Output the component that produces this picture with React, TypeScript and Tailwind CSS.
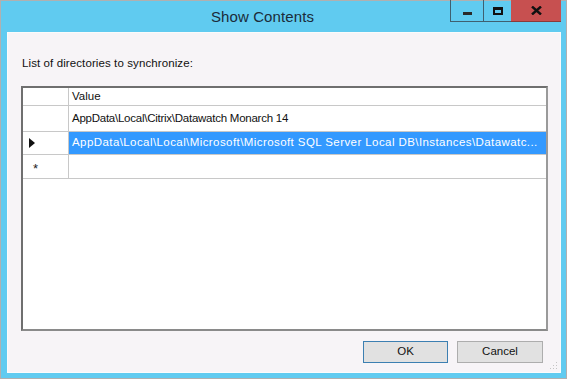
import React from "react";

const font = { fontFamily: '"Liberation Sans", Arial, sans-serif' };

export default function App() {
  return (
    <div className="w-[567px] h-[379px] bg-[#60cbf0] border border-[#b0b0b0] flex flex-col" style={font}>
      <div className="h-[31px] relative flex items-center justify-center shrink-0">
        <span className="text-[15px] text-[#1b2c3a] tracking-[0.1px] mt-[1px] mr-[42px]">Show Contents</span>
        <div className="absolute top-[-1px] right-[5px] flex h-[22px]">
          <div className="w-[33px] h-full border-l border-b border-[#3f6070] flex items-center justify-center">
            <div className="w-[9px] h-[3px] bg-[#2a2a2a] mt-[6px]" />
          </div>
          <div className="w-[28px] h-full border-l border-b border-[#3f6070] flex items-center justify-center">
            <div className="w-[10px] h-[8px] border-[2px] border-t-[3px] border-[#111]" />
          </div>
          <div className="w-[50px] h-full bg-[#c75050] border-b border-[#8a3a3a] flex items-center justify-center">
            <svg width="11" height="9" viewBox="0 0 11 9">
              <path d="M1 0.5 L10 8.5 M10 0.5 L1 8.5" stroke="#111" strokeWidth="2.4" />
            </svg>
          </div>
        </div>
      </div>
      <div className="flex-1 ml-[6px] mr-[5px] mb-[5px] bg-[#f7f4f7] border border-[#fbfbfb] flex flex-col relative">
        <div className="pl-[14px] pt-[23px] text-[11.5px] text-[#111] leading-[14px] tracking-[0.1px]">List of directories to synchronize:</div>
        <div className="ml-[13px] mr-[12px] mt-[16px] h-[245px] bg-white border-[2px] border-[#6f6f6f] border-r-[#9a9a9a] border-b-[#8a8a8a] flex flex-col text-[11.5px]">
          <div className="flex h-[18px] border-b border-[#c8c8c8]">
            <div className="w-[46px] border-r border-[#c8c8c8]" />
            <div className="flex-1 pl-[3px] flex items-center text-[#111]">Value</div>
          </div>
          <div className="flex h-[26px] border-b border-[#c8c8c8]">
            <div className="w-[46px] border-r border-[#c8c8c8]" />
            <div className="flex-1 pl-[3px] flex items-center text-[#111] tracking-[-0.25px]">AppData\Local\Citrix\Datawatch Monarch 14</div>
          </div>
          <div className="flex h-[23px] border-b border-[#c8c8c8]">
            <div className="w-[46px] border-r border-[#c8c8c8] flex items-center pl-[6px]">
              <svg width="6" height="10" viewBox="0 0 6 10"><path d="M0 0 L6 5 L0 10 Z" fill="#111" /></svg>
            </div>
            <div className="flex-1 bg-[#3399ff] pl-[3px] flex items-center text-white whitespace-nowrap overflow-hidden tracking-[0.42px]">
              AppData\Local\Local\Microsoft\Microsoft SQL Server Local DB\Instances\Datawatc...
            </div>
          </div>
          <div className="flex h-[24px] border-b border-[#c8c8c8]">
            <div className="w-[46px] border-r border-[#c8c8c8] flex items-center pl-[10px]">
              <span className="text-[13px] text-[#222] leading-none mt-[3px]">*</span>
            </div>
            <div className="flex-1" />
          </div>
        </div>
        <div className="flex justify-end gap-[9px] mr-[17px] mt-[10px] text-[11.5px] text-[#111]">
          <div className="w-[85px] h-[22px] bg-[#e1e1e1] border border-[#3c7fb1] flex items-center justify-center">OK</div>
          <div className="w-[86px] h-[22px] bg-[#e1e1e1] border border-[#adadad] flex items-center justify-center">Cancel</div>
        </div>
        <svg className="absolute right-[2px] bottom-[2px]" width="9" height="9" viewBox="0 0 9 9">
          <g fill="#c4c4c4">
            <rect x="7" y="1" width="1" height="1" />
            <rect x="4" y="4" width="1" height="1" />
            <rect x="7" y="4" width="1" height="1" />
            <rect x="1" y="7" width="1" height="1" />
            <rect x="4" y="7" width="1" height="1" />
            <rect x="7" y="7" width="1" height="1" />
          </g>
        </svg>
      </div>
    </div>
  );
}
